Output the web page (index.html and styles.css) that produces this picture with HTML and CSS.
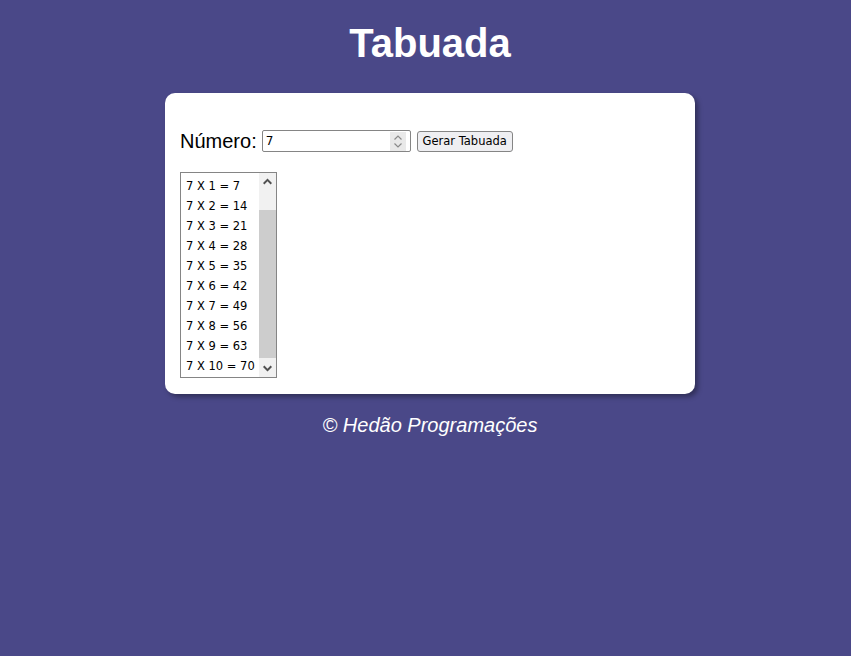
FILE: index.html
```html
<!DOCTYPE html>
<html lang="pt-BR">
<head>
<meta charset="utf-8">
<title>Tabuada</title>
<link rel="stylesheet" href="styles.css">
</head>
<body>
  <h1 class="title">Tabuada</h1>
  <main class="card">
    <div class="form-row">
      <label class="label" for="numero">Número:</label>
      <span class="num-wrap">
        <input class="num-input" id="numero" type="number" value="7">
        <span class="spin" aria-hidden="true">
          <svg width="16" height="19" viewBox="0 0 16 19">
            <path d="M4.5 7.5 L8 4 L11.5 7.5" fill="none" stroke="#8a8a8a" stroke-width="1.2"/>
            <path d="M4.5 11.5 L8 15 L11.5 11.5" fill="none" stroke="#8a8a8a" stroke-width="1.2"/>
          </svg>
        </span>
      </span>
      <button class="btn" type="button">Gerar Tabuada</button>
    </div>
    <div class="result" role="listbox">
      <ul class="options">
        <li>7 X 1 = 7</li>
        <li>7 X 2 = 14</li>
        <li>7 X 3 = 21</li>
        <li>7 X 4 = 28</li>
        <li>7 X 5 = 35</li>
        <li>7 X 6 = 42</li>
        <li>7 X 7 = 49</li>
        <li>7 X 8 = 56</li>
        <li>7 X 9 = 63</li>
        <li>7 X 10 = 70</li>
      </ul>
      <div class="scrollbar" aria-hidden="true">
        <span class="sb-btn">
          <svg width="17" height="17" viewBox="0 0 17 17"><path d="M4 10 L8.5 5.5 L13 10 L11.6 11.4 L8.5 8.3 L5.4 11.4 Z" fill="#505050"/></svg>
        </span>
        <span class="sb-track"><span class="sb-thumb"></span></span>
        <span class="sb-btn">
          <svg width="17" height="17" viewBox="0 0 17 17"><path d="M4 7 L8.5 11.5 L13 7 L11.6 5.6 L8.5 8.7 L5.4 5.6 Z" fill="#505050"/></svg>
        </span>
      </div>
    </div>
  </main>
  <footer class="footer">© Hedão Programações</footer>
</body>
</html>
```

FILE: styles.css
```css
html, body {
  margin: 0;
  padding: 0;
}
body {
  background: #4a4888;
  font-family: "Liberation Sans", Arial, sans-serif;
  color: #000;
  padding-left: 9px;
  min-height: 656px;
  box-sizing: border-box;
}
.title {
  margin: 0;
  padding-top: 20px;
  text-align: center;
  color: #fff;
  font-size: 40px;
  line-height: 46px;
  font-weight: bold;
}
.card {
  width: 500px;
  margin: 27px auto 0;
  padding: 37px 15px 16px;
  background: #fff;
  border-radius: 10px;
  box-shadow: 3px 3px 5px rgba(0, 0, 0, 0.35);
}
.form-row {
  display: flex;
  align-items: center;
  height: 22px;
}
.label {
  font-size: 20px;
  margin-right: 5px;
}
.num-wrap {
  position: relative;
  display: block;
  width: 149px;
  height: 22px;
}
.num-input {
  box-sizing: border-box;
  width: 149px;
  height: 22px;
  margin: 0;
  padding: 0 3px;
  border: 1px solid #858585;
  border-radius: 2px;
  font-family: "DejaVu Sans", Tahoma, sans-serif;
  font-size: 12px;
  color: #000;
  -moz-appearance: textfield;
  appearance: textfield;
}
.num-input::-webkit-inner-spin-button,
.num-input::-webkit-outer-spin-button {
  -webkit-appearance: none;
  margin: 0;
}
.spin {
  position: absolute;
  top: 2px;
  right: 5px;
  width: 16px;
  height: 19px;
  background: #e9e9e9;
  display: block;
}
.spin svg {
  display: block;
}
.btn {
  box-sizing: border-box;
  width: 96px;
  height: 21px;
  margin-left: 6px;
  padding: 0;
  border: 1px solid #858585;
  border-radius: 3px;
  background: #efeff2;
  font-family: "DejaVu Sans", Tahoma, sans-serif;
  font-size: 11.5px;
  white-space: nowrap;
  color: #000;
}
.result {
  display: flex;
  box-sizing: border-box;
  width: 97px;
  height: 206px;
  margin-top: 20px;
  border: 1px solid #858585;
  font-family: "DejaVu Sans", Tahoma, sans-serif;
  font-size: 11.5px;
  color: #000;
}
.options {
  list-style: none;
  margin: 0;
  padding: 3px 0 0;
  flex: 1;
  overflow: hidden;
}
.options li {
  height: 20px;
  line-height: 20px;
  padding-left: 5px;
  white-space: nowrap;
}
.scrollbar {
  width: 17px;
  display: flex;
  flex-direction: column;
  background: #f1f1f1;
}
.sb-btn {
  display: block;
  height: 17px;
}
.sb-btn svg {
  display: block;
}
.sb-track {
  flex: 1;
  display: flex;
  flex-direction: column;
  padding-top: 20px;
  padding-bottom: 2px;
}
.sb-thumb {
  flex: 1;
  background: #cdcdcd;
}
.footer {
  margin-top: 20px;
  text-align: center;
  color: #fff;
  font-style: italic;
  font-size: 20px;
}
```
